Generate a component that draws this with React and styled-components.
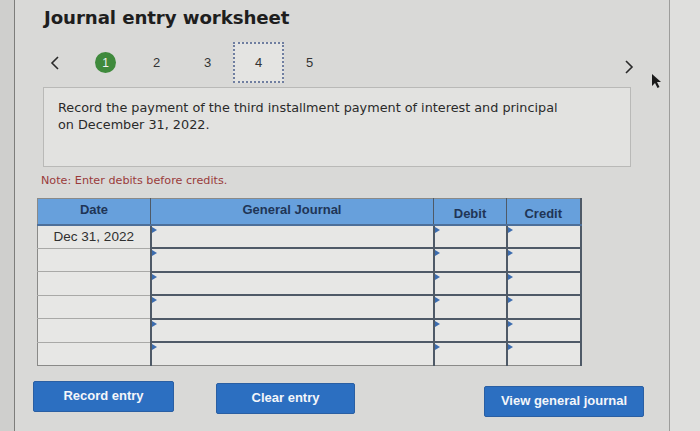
import React from 'react'
import styled, { createGlobalStyle } from 'styled-components'

const COLORS = {
  PAGE: '#d9d9d7',
  STRIP: '#dfdfdd',
  BOX: '#e2e2e0',
  ROW: '#e7e7e5',
  HEADER: '#67a0dc',
  HEADER_TEXT: '#1f3556',
  GRID: '#4f5a67',
  GRID_LIGHT: '#a9a9a7',
  BUTTON: '#2c6fc1',
  NOTE: '#9a3b3b',
  TEXT: '#2a2a2a',
  GREEN: '#3f8a3c'
}

const GlobalStyle = createGlobalStyle`
  body {
    margin: 0;
    background: ${COLORS.PAGE};
  }
`

// ---------------------------------------------------------------------------//
// FRAME
// ---------------------------------------------------------------------------//

const Screen = styled.div`
  display: flex;
  width: 700px;
  height: 431px;
  overflow: hidden;
  position: relative;
  background: ${COLORS.PAGE};
`

const LeftEdge = styled.div`
  width: 14px;
  background: #cfcfcd;
  border-right: 1px solid #7d7d7b;
`

const Main = styled.main`
  width: 655px;
  padding: 6px 0 0 27px;
  box-sizing: border-box;
  display: flex;
  flex-direction: column;
  border-right: 1px solid #9d9d9b;
`

const RightStrip = styled.div`
  flex: 1;
  background: ${COLORS.STRIP};
`

const Title = styled.h1`
  margin: 0 0 0 2px;
  font-family: "DejaVu Sans", Verdana, sans-serif;
  font-size: 18.2px;
  font-weight: 700;
  line-height: 24px;
  color: #1e1e1e;
  letter-spacing: -0.1px;
`

// ---------------------------------------------------------------------------//
// STEPS
// ---------------------------------------------------------------------------//

const StepRow = styled.nav`
  display: flex;
  align-items: center;
  height: 41px;
  margin-top: 12px;
  width: 612px;
`

const Chevron = styled.span`
  width: 38px;
  padding-left: 8px;
  box-sizing: border-box;
  display: flex;
  align-items: center;
  margin-left: ${p => (p.$right ? 'auto' : '0')};
  margin-top: ${p => (p.$right ? '8px' : '0')};
`

const Step = styled.span`
  width: 51px;
  height: 41px;
  display: flex;
  align-items: center;
  justify-content: center;
  box-sizing: border-box;
  font-family: "Liberation Sans", Arial, sans-serif;
  font-size: 13px;
  color: #333;
  border: ${p => (p.$current ? '2px dotted #6f7ea0' : 'none')};
  background: ${p => (p.$current ? '#e4e4e2' : 'transparent')};
`

const Dot = styled.span`
  width: 21px;
  height: 21px;
  border-radius: 50%;
  background: ${COLORS.GREEN};
  color: #f2f2f2;
  display: flex;
  align-items: center;
  justify-content: center;
  font-size: 12px;
`

// ---------------------------------------------------------------------------//
// PROMPT
// ---------------------------------------------------------------------------//

const Prompt = styled.div`
  width: 588px;
  height: 80px;
  margin: 4px 0 0 1px;
  box-sizing: border-box;
  border: 1px solid #b9b9b7;
  background: ${COLORS.BOX};
  padding: 11px 14px;
  font-family: "DejaVu Sans", Verdana, sans-serif;
  font-size: 12.8px;
  line-height: 17px;
  color: ${COLORS.TEXT};
`

const Note = styled.p`
  margin: 7px 0 0 -1px;
  font-family: "DejaVu Sans", Verdana, sans-serif;
  font-size: 11.2px;
  color: ${COLORS.NOTE};
`

// ---------------------------------------------------------------------------//
// TABLE
// ---------------------------------------------------------------------------//

const Journal = styled.table`
  margin: 11px 0 0 -5px;
  border-collapse: collapse;
  table-layout: fixed;
  width: 544px;
  font-family: "Liberation Sans", Arial, sans-serif;
  font-size: 13px;
  border: 1px solid #8a8a88;
  border-right: 2px solid ${COLORS.GRID};
`

const Head = styled.th`
  height: 26px;
  box-sizing: border-box;
  background: ${COLORS.HEADER};
  color: ${COLORS.HEADER_TEXT};
  font-weight: 700;
  font-size: 13px;
  padding: ${p => (p.$low ? '4px 0 0' : '0 0 4px')};
  border-left: ${p => (p.$first ? 'none' : `1px solid ${COLORS.GRID}`)};
  border-bottom: 2px solid #4d6f99;
`

const DateCell = styled.td`
  height: 23.5px;
  box-sizing: border-box;
  background: ${COLORS.ROW};
  border-top: 1px solid ${COLORS.GRID_LIGHT};
  text-align: center;
  color: #2f2f2f;
  font-size: 13.5px;
  padding: 0 0 1px;
`

const InputCell = styled.td`
  height: 23.5px;
  box-sizing: border-box;
  background: ${COLORS.ROW};
  border-top: 2px solid ${COLORS.GRID};
  border-left: 2px solid ${COLORS.GRID};
  position: relative;
  padding: 0;
  &::before {
    content: '';
    position: absolute;
    left: 0;
    top: 1px;
    border-left: 5px solid #3c6cae;
    border-top: 3px solid transparent;
    border-bottom: 3px solid transparent;
  }
`

// ---------------------------------------------------------------------------//
// BUTTONS
// ---------------------------------------------------------------------------//

const ButtonRow = styled.div`
  display: flex;
  align-items: flex-start;
  margin-top: 15px;
  margin-left: -9px;
`

const Button = styled.button`
  width: ${p => p.$w}px;
  height: 31px;
  margin-left: ${p => p.$gap}px;
  margin-top: ${p => p.$drop}px;
  background: ${COLORS.BUTTON};
  color: #f4f6fa;
  border: 1px solid #2a5fa3;
  border-radius: 2px;
  font-family: "Liberation Sans", Arial, sans-serif;
  font-weight: 700;
  font-size: 13px;
  padding: 0 0 2px;
  cursor: pointer;
`

const Cursor = styled.svg`
  position: absolute;
  left: 651px;
  top: 73px;
`

const ChevronIcon = ({ dir }) => (
  <svg width="10" height="14" viewBox="0 0 10 14">
    <path
      d={dir === 'left' ? 'M8 1 L2 7 L8 13' : 'M2 1 L8 7 L2 13'}
      fill="none"
      stroke="#2a2a2a"
      strokeWidth="1.6"
    />
  </svg>
)

const ROWS = ['Dec 31, 2022', '', '', '', '', '']

export default function App () {
  return (
    <Screen>
      <GlobalStyle />
      <LeftEdge />
      <Main>
        <Title>Journal entry worksheet</Title>
        <StepRow>
          <Chevron><ChevronIcon dir="left" /></Chevron>
          <Step><Dot>1</Dot></Step>
          <Step>2</Step>
          <Step>3</Step>
          <Step $current>4</Step>
          <Step>5</Step>
          <Chevron $right><ChevronIcon dir="right" /></Chevron>
        </StepRow>
        <Prompt>
          Record the payment of the third installment payment of interest and principal
          <br />
          on December 31, 2022.
        </Prompt>
        <Note>Note: Enter debits before credits.</Note>
        <Journal>
          <colgroup>
            <col style={{ width: 113 }} />
            <col style={{ width: 283 }} />
            <col style={{ width: 73 }} />
            <col style={{ width: 74 }} />
          </colgroup>
          <thead>
            <tr>
              <Head $first>Date</Head>
              <Head>General Journal</Head>
              <Head $low>Debit</Head>
              <Head $low>Credit</Head>
            </tr>
          </thead>
          <tbody>
            {ROWS.map((d, i) => (
              <tr key={i}>
                <DateCell>{d}</DateCell>
                <InputCell />
                <InputCell />
                <InputCell />
              </tr>
            ))}
          </tbody>
        </Journal>
        <ButtonRow>
          <Button $w={141} $gap={0} $drop={0}>Record entry</Button>
          <Button $w={139} $gap={42} $drop={2}>Clear entry</Button>
          <Button $w={160} $gap={129} $drop={5}>View general journal</Button>
        </ButtonRow>
      </Main>
      <RightStrip />
      <Cursor width="12" height="16" viewBox="0 0 12 16">
        <path d="M1 1 L1 13 L4 10 L6.5 15 L8.5 14 L6 9 L10 9 Z" fill="#1a1a1a" />
      </Cursor>
    </Screen>
  )
}
